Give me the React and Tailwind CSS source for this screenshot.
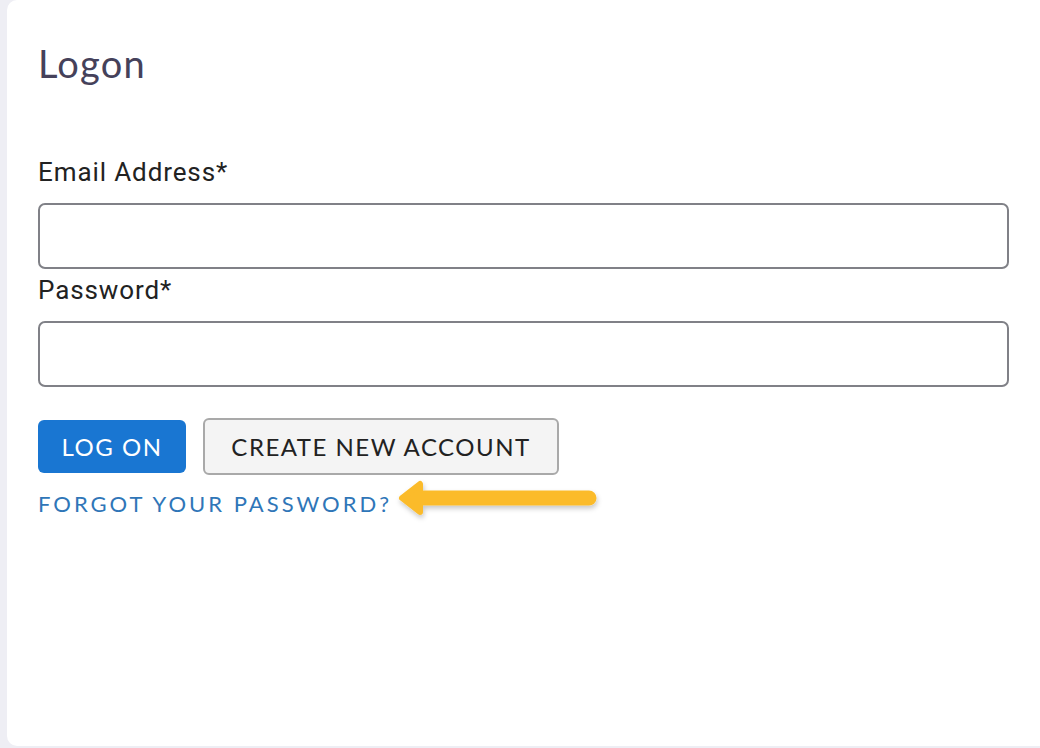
import React from "react";

const poppins = { fontFamily: "Lato, 'Open Sans', sans-serif" };

function Arrow() {
  return (
    <svg width="216" height="50" viewBox="0 0 216 50" className="-mt-[17px]">
      <defs>
        <filter id="arrowShadow" x="-10%" y="-40%" width="120%" height="180%">
          <feDropShadow dx="1" dy="3" stdDeviation="2.5" floodColor="#000" floodOpacity="0.22" />
        </filter>
      </defs>
      <g filter="url(#arrowShadow)" fill="#fbbb2b" stroke="#fbbb2b" strokeLinejoin="round" strokeLinecap="round">
        <line x1="26" y1="25" x2="197" y2="25" strokeWidth="15" />
        <polygon points="10,25 28,11 28,39" strokeWidth="6" />
      </g>
    </svg>
  );
}

export default function App() {
  return (
    <div className="min-h-[748px] w-full bg-[#eeeef4] pl-[7px] pb-[2px]">
      <div
        className="h-[746px] rounded-bl-[10px] rounded-tl-[10px] bg-white pl-[31px] pr-[31px] pt-[41px]"
        style={{ fontFamily: "Roboto, 'Liberation Sans', sans-serif" }}
      >
        <h1 className="text-[38px] leading-[44px] tracking-[1.2px] text-[#45415a]" style={poppins}>
          Logon
        </h1>

        <form className="mt-[71px]" onSubmit={(e) => e.preventDefault()}>
          <label className="block text-[26px] leading-[32px] tracking-[0.9px] text-[#222]">Email Address*</label>
          <input
            type="email"
            className="mt-[15px] block h-[66px] w-full rounded-[7px] border-2 border-[#808187] bg-white px-3 outline-none"
          />
          <label className="mt-[5px] block text-[26px] leading-[32px] tracking-[0.9px] text-[#222]">Password*</label>
          <input
            type="password"
            className="mt-[15px] block h-[66px] w-full rounded-[7px] border-2 border-[#808187] bg-white px-3 outline-none"
          />

          <div className="mt-[31px] flex items-center gap-[17px]">
            <button
              type="submit"
              className="h-[53px] w-[148px] rounded-[6px] bg-[#1976d2] text-[24px] tracking-[1.5px] text-white"
              style={poppins}
            >
              LOG ON
            </button>
            <button
              type="button"
              className="h-[57px] w-[356px] rounded-[6px] border-2 border-[#a9a9a9] bg-[#f4f4f4] text-[24px] tracking-[1.5px] text-[#222]"
              style={poppins}
            >
              CREATE NEW ACCOUNT
            </button>
          </div>

          <div className="mt-[15px] flex items-start">
            <a href="#" className="text-[22px] leading-[28px] tracking-[3px] text-[#2f76b8]" style={poppins}>
              FORGOT YOUR PASSWORD?
            </a>
            <Arrow />
          </div>
        </form>
      </div>
    </div>
  );
}
